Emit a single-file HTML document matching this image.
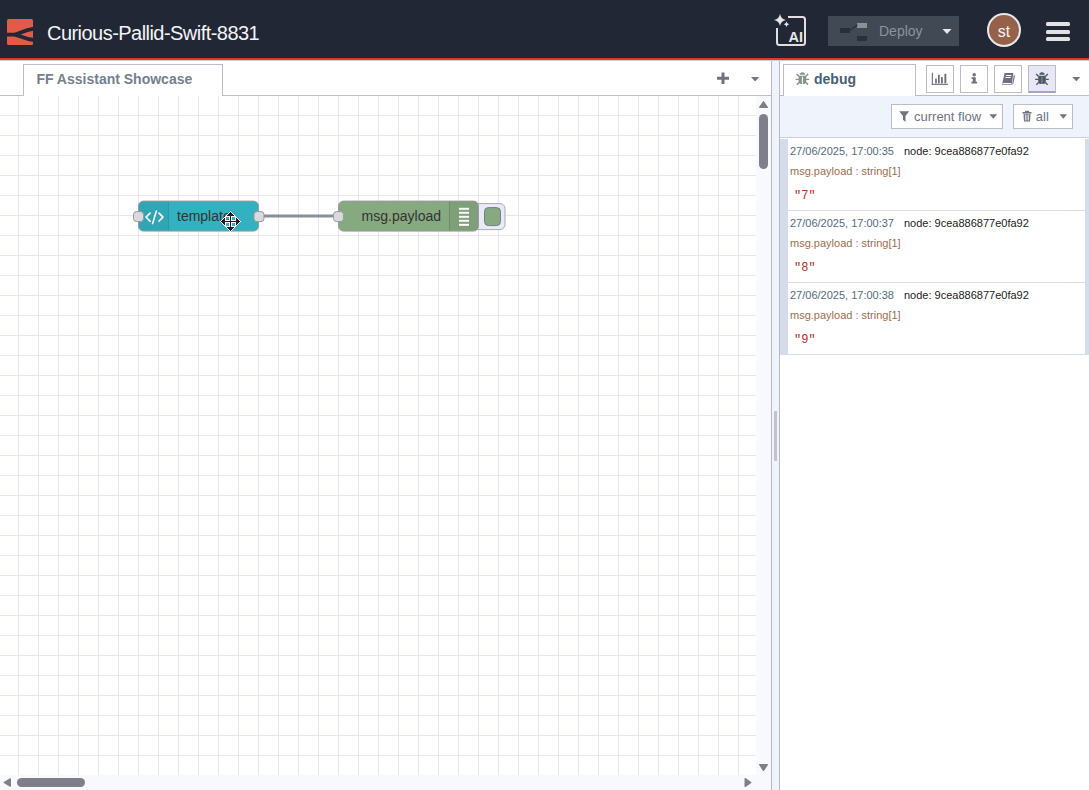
<!DOCTYPE html>
<html><head><meta charset="utf-8">
<style>
*{margin:0;padding:0;box-sizing:border-box}
html,body{width:1089px;height:790px;overflow:hidden;background:#fff;font-family:"Liberation Sans",sans-serif}
.a{position:absolute}
#hdr{left:0;top:0;width:1089px;height:58px;background:#212735}
#red{left:0;top:57px;width:1089px;height:1px;background:#172533}
#red2{left:0;top:58px;width:1089px;height:2px;background:#dc3a2e}
#shd{left:0;top:60px;width:1089px;height:1px;background:#c9d0d8}
#title{left:47px;top:21.5px;font-size:20px;letter-spacing:-0.54px;color:#f3f4f6;line-height:23px;white-space:nowrap}
#deploy{left:828px;top:16px;width:131px;height:30px;background:#414955}
#deploytxt{left:879px;top:23px;font-size:14px;line-height:16px;color:#8d939b}
#avatar{left:987px;top:13px;width:34px;height:34px;border-radius:50%;background:#96614a;border:2px solid #e6e9ee}
#avtxt{left:987px;top:22.5px;width:34px;text-align:center;font-size:16px;line-height:18px;color:#f4f4f4}
.bar{left:1046px;width:24px;height:4px;border-radius:1.5px;background:#e2e2e4}
/* workspace */
#wsb{left:0;top:95px;width:771px;height:1px;background:#bcbcc4}
#tab{left:23px;top:64px;width:200px;height:32px;border:1px solid #bcbcc4;border-bottom:none;background:#fff}
#tabtxt{left:36.4px;top:72px;font-size:14px;font-weight:bold;color:#767f8c;line-height:14px;white-space:nowrap}
#canvas{left:0;top:96px;width:756px;height:679px;background-color:#fff;
 background-image:linear-gradient(to right,#e6e5f3 1px,transparent 1px),linear-gradient(to bottom,#e6e5f3 1px,transparent 1px);
 background-size:20px 20px;background-position:18px 19px}
#vsb{left:756px;top:96px;width:15px;height:679px;background:#f8f9fc}
#hsb{left:0;top:775px;width:756px;height:15px;background:#f8f9fc}
#corner{left:756px;top:775px;width:15px;height:15px;background:#f8f9fc}
#wsr{left:771px;top:61px;width:1px;height:729px;background:#b8b8c0}
#sep{left:772px;top:61px;width:7px;height:729px;background:#eff3fc}
#handle{left:774px;top:411px;width:3px;height:50px;background:#c2c2cb}
#sbl{left:779px;top:61px;width:1px;height:729px;background:#b8b8c0}
/* sidebar */
#sbb{left:780px;top:95px;width:309px;height:1px;background:#bcbcc4}
#dtab{left:783px;top:64px;width:133px;height:32px;border:1px solid #bcbcc4;border-bottom:none;background:#fff}
#dtabtxt{left:814px;top:72px;font-size:14px;font-weight:bold;color:#46607a;line-height:14px}
.sbtn{top:65px;width:28px;height:28px;border:1px solid #bcbcc4;background:#fff}
#toolbar{left:780px;top:96px;width:309px;height:41px;background:#eff3fc}
#tbb{left:780px;top:137px;width:309px;height:1px;background:#ccd0dc}
.tbtn{top:104px;height:25px;border:1px solid #bcbcc4;background:#fff;font-size:13px;color:#7c8591}
.msg{left:780px;width:309px;height:72px;border-left:8px solid #d5dbeb;border-bottom:1px solid #d7dcec;background:#fff}
.rbar{left:1085px;width:4px;height:71px;background:#d5dbeb}
.ts{left:790px;font-size:11px;color:#546b7c;line-height:13px;white-space:nowrap}
.nd{left:904px;font-size:11px;color:#222;line-height:13px;white-space:nowrap}
.mp{left:790px;font-size:11px;color:#9f6d50;line-height:13px;white-space:nowrap}
.val{left:794px;margin-top:0.8px;font-family:"Liberation Mono",monospace;font-size:12px;color:#ba2e28;line-height:14px;white-space:nowrap}
</style></head><body>
<div class="a" id="hdr"></div>
<div class="a" id="red"></div>
<div class="a" id="red2"></div>
<div class="a" id="shd"></div>
<svg class="a" style="left:0;top:0" width="60" height="58" viewBox="0 0 60 58">
 <rect x="7" y="19" width="26" height="26" rx="1.5" fill="#e35b48"/>
 <path d="M6,34.6 L14,34.6 C18,34.6 23,30.3 34,28.7 M14,34.6 C18,34.6 23,38.8 34,40" stroke="#212735" stroke-width="3.8" fill="none"/>
</svg>
<div class="a" id="title">Curious-Pallid-Swift-8831</div>
<!-- AI icon -->
<svg class="a" style="left:770px;top:10px" width="42" height="42" viewBox="770 10 42 42">
 <path d="M788,17 L802.5,17 Q805,17 805,19.5 L805,42.5 Q805,45 802.5,45 L779.5,45 Q777,45 777,42.5 L777,28" stroke="#e0e0e4" stroke-width="2" fill="none"/>
 <path d="M780,13.8 Q780.8,19 786,19.9 Q780.8,20.8 780,26 Q779.2,20.8 774,19.9 Q779.2,19 780,13.8Z" fill="#e6e6e8"/>
 <path d="M786.5,21.6 Q786.9,23.9 789.2,24.3 Q786.9,24.7 786.5,27 Q786.1,24.7 783.8,24.3 Q786.1,23.9 786.5,21.6Z" fill="#e6e6e8"/>
 <text x="788.5" y="42.3" font-family="Liberation Sans" font-weight="bold" font-size="14.5" fill="#e6e6e8">AI</text>
</svg>
<div class="a" id="deploy"></div>
<svg class="a" style="left:828px;top:16px" width="131" height="30" viewBox="828 16 131 30">
 <rect x="840" y="28" width="10" height="5" fill="#2a303a"/>
 <rect x="857" y="23" width="10" height="5" fill="#8d9098"/>
 <rect x="857" y="36" width="10" height="5" fill="#2a303a"/>
 <path d="M849.5,30.5 L857.5,25" stroke="#2a303a" stroke-width="1.2"/>
 <path d="M942.5,29 L951.5,29 L947,34Z" fill="#e8e8ec"/>
</svg>
<div class="a" id="deploytxt">Deploy</div>
<div class="a" id="avatar"></div>
<div class="a" id="avtxt">st</div>
<div class="a bar" style="top:22px"></div>
<div class="a bar" style="top:29.5px"></div>
<div class="a bar" style="top:37px"></div>

<!-- workspace -->
<div class="a" id="wsb"></div>
<div class="a" id="tab"></div>
<div class="a" id="tabtxt">FF Assistant Showcase</div>
<svg class="a" style="left:700px;top:61px" width="71" height="34" viewBox="700 61 71 34">
 <path d="M717,78.3 L729,78.3 M723,72.5 L723,84" stroke="#6e7480" stroke-width="3"/>
 <path d="M751,77 L759.2,77 L755.1,81.5Z" fill="#6e7480"/>
</svg>
<div class="a" id="canvas"></div>
<div class="a" id="vsb"></div>
<div class="a" id="hsb"></div>
<div class="a" id="corner"></div>
<svg class="a" style="left:0;top:96px" width="771" height="694" viewBox="0 96 771 694">
 <!-- scrollbars -->
 <path d="M763.5,101.8 L767.3,107.3 L759.7,107.3Z" fill="#7f7f8b" stroke="#7f7f8b" stroke-width="1.4" stroke-linejoin="round"/>
 <rect x="759" y="114" width="9" height="55" rx="4.5" fill="#7f7f8b"/>
 <path d="M759.7,764.7 L767.3,764.7 L763.5,770.3Z" fill="#7f7f8b" stroke="#7f7f8b" stroke-width="1.4" stroke-linejoin="round"/>
 <path d="M10.3,778.9 L10.3,786.1 L4.2,782.5Z" fill="#7f7f8b" stroke="#7f7f8b" stroke-width="1.4" stroke-linejoin="round"/>
 <rect x="17" y="778" width="68" height="9" rx="4.5" fill="#7f7f8b"/>
 <path d="M745.2,778.7 L745.2,786.3 L750.8,782.5Z" fill="#7f7f8b" stroke="#7f7f8b" stroke-width="1.4" stroke-linejoin="round"/>
 <!-- wire -->
 <path d="M259,216 L339,216" stroke="#888f96" stroke-width="3" fill="none"/>
 <g transform="translate(0,0.6)">
 <!-- template node -->
 <rect x="138.5" y="200.5" width="120" height="30" rx="5" fill="#34b1c1" stroke="#9a9aa0" stroke-width="1"/>
 <path d="M143.5,201 L168.5,201 L168.5,230 L143.5,230 Q139,230 139,225.5 L139,205.5 Q139,201 143.5,201Z" fill="rgba(0,0,0,0.06)"/>
 <path d="M168.5,201 L168.5,230" stroke="rgba(0,40,80,0.15)" stroke-width="1"/>
 <g stroke="#fff" stroke-width="1.6" fill="none" stroke-linecap="round" stroke-linejoin="round">
  <path d="M150,212.5 L146,216.5 L150,220.5"/>
  <path d="M159,212.5 L163,216.5 L159,220.5"/>
  <path d="M156.4,210.5 L152.6,223"/>
 </g>
 <text x="177" y="220.5" font-family="Liberation Sans" font-size="14" fill="#333">template</text>
 <rect x="133.5" y="211" width="10" height="10" rx="3" fill="#d9dadf" stroke="#999" stroke-width="1"/>
 <rect x="254" y="211" width="10" height="10" rx="3" fill="#d9dadf" stroke="#999" stroke-width="1"/>
 <!-- debug node -->
 <rect x="473" y="203" width="32" height="26" rx="5" fill="#eaeaf6" stroke="#aaaab4" stroke-width="1"/>
 <rect x="484.5" y="207" width="16" height="18" rx="4" fill="#87a980" stroke="#7a7a90" stroke-width="1"/>
 <rect x="338.5" y="200.5" width="140" height="30" rx="5" fill="#87a980" stroke="#9a9aa0" stroke-width="1"/>
 <path d="M449.5,201 L473.5,201 Q478,201 478,205.5 L478,225.5 Q478,230 473.5,230 L449.5,230Z" fill="rgba(0,0,0,0.06)"/>
 <path d="M449.5,201 L449.5,230" stroke="rgba(0,0,0,0.15)" stroke-width="1"/>
 <g fill="#fff">
  <rect x="459" y="207.2" width="10" height="2"/>
  <rect x="459" y="211.2" width="10" height="2"/>
  <rect x="459" y="215.2" width="10" height="2"/>
  <rect x="459" y="219.2" width="10" height="2"/>
  <rect x="459" y="223.2" width="10" height="2"/>
 </g>
 <text x="441" y="220.5" text-anchor="end" font-family="Liberation Sans" font-size="14" fill="#333">msg.payload</text>
 <rect x="333.5" y="211" width="10" height="10" rx="3" fill="#d9dadf" stroke="#999" stroke-width="1"/>
 </g>
 <!-- cursor -->
 <g shape-rendering="crispEdges"><g fill="#fff"><rect x="230" y="211" width="1" height="1"/><rect x="229" y="212" width="1" height="1"/><rect x="231" y="212" width="1" height="1"/><rect x="228" y="213" width="1" height="1"/><rect x="232" y="213" width="1" height="1"/><rect x="227" y="214" width="1" height="1"/><rect x="233" y="214" width="1" height="1"/><rect x="226" y="215" width="1" height="1"/><rect x="234" y="215" width="1" height="1"/><rect x="225" y="216" width="5" height="1"/><rect x="231" y="216" width="5" height="1"/><rect x="224" y="217" width="2" height="1"/><rect x="229" y="217" width="1" height="1"/><rect x="231" y="217" width="1" height="1"/><rect x="235" y="217" width="2" height="1"/><rect x="223" y="218" width="1" height="1"/><rect x="225" y="218" width="1" height="1"/><rect x="229" y="218" width="1" height="1"/><rect x="231" y="218" width="1" height="1"/><rect x="235" y="218" width="1" height="1"/><rect x="237" y="218" width="1" height="1"/><rect x="222" y="219" width="1" height="1"/><rect x="225" y="219" width="1" height="1"/><rect x="229" y="219" width="1" height="1"/><rect x="231" y="219" width="1" height="1"/><rect x="235" y="219" width="1" height="1"/><rect x="238" y="219" width="1" height="1"/><rect x="221" y="220" width="1" height="1"/><rect x="225" y="220" width="5" height="1"/><rect x="231" y="220" width="5" height="1"/><rect x="239" y="220" width="1" height="1"/><rect x="220" y="221" width="1" height="1"/><rect x="240" y="221" width="1" height="1"/><rect x="221" y="222" width="1" height="1"/><rect x="225" y="222" width="5" height="1"/><rect x="231" y="222" width="5" height="1"/><rect x="239" y="222" width="1" height="1"/><rect x="222" y="223" width="1" height="1"/><rect x="225" y="223" width="1" height="1"/><rect x="229" y="223" width="1" height="1"/><rect x="231" y="223" width="1" height="1"/><rect x="235" y="223" width="1" height="1"/><rect x="238" y="223" width="1" height="1"/><rect x="223" y="224" width="1" height="1"/><rect x="225" y="224" width="1" height="1"/><rect x="229" y="224" width="1" height="1"/><rect x="231" y="224" width="1" height="1"/><rect x="235" y="224" width="1" height="1"/><rect x="237" y="224" width="1" height="1"/><rect x="224" y="225" width="2" height="1"/><rect x="229" y="225" width="1" height="1"/><rect x="231" y="225" width="1" height="1"/><rect x="235" y="225" width="2" height="1"/><rect x="225" y="226" width="5" height="1"/><rect x="231" y="226" width="5" height="1"/><rect x="226" y="227" width="1" height="1"/><rect x="234" y="227" width="1" height="1"/><rect x="227" y="228" width="1" height="1"/><rect x="233" y="228" width="1" height="1"/><rect x="228" y="229" width="1" height="1"/><rect x="232" y="229" width="1" height="1"/><rect x="229" y="230" width="1" height="1"/><rect x="231" y="230" width="1" height="1"/><rect x="230" y="231" width="1" height="1"/></g><g fill="#1b1f2a"><rect x="230" y="212" width="1" height="1"/><rect x="229" y="213" width="3" height="1"/><rect x="228" y="214" width="5" height="1"/><rect x="227" y="215" width="7" height="1"/><rect x="230" y="216" width="1" height="1"/><rect x="230" y="217" width="1" height="1"/><rect x="224" y="218" width="1" height="1"/><rect x="230" y="218" width="1" height="1"/><rect x="236" y="218" width="1" height="1"/><rect x="223" y="219" width="2" height="1"/><rect x="230" y="219" width="1" height="1"/><rect x="236" y="219" width="2" height="1"/><rect x="222" y="220" width="3" height="1"/><rect x="230" y="220" width="1" height="1"/><rect x="236" y="220" width="3" height="1"/><rect x="221" y="221" width="19" height="1"/><rect x="222" y="222" width="3" height="1"/><rect x="230" y="222" width="1" height="1"/><rect x="236" y="222" width="3" height="1"/><rect x="223" y="223" width="2" height="1"/><rect x="230" y="223" width="1" height="1"/><rect x="236" y="223" width="2" height="1"/><rect x="224" y="224" width="1" height="1"/><rect x="230" y="224" width="1" height="1"/><rect x="236" y="224" width="1" height="1"/><rect x="230" y="225" width="1" height="1"/><rect x="230" y="226" width="1" height="1"/><rect x="227" y="227" width="7" height="1"/><rect x="228" y="228" width="5" height="1"/><rect x="229" y="229" width="3" height="1"/><rect x="230" y="230" width="1" height="1"/></g></g>

</svg>
<div class="a" id="wsr"></div>
<div class="a" id="sep"></div>
<div class="a" id="handle"></div>
<div class="a" id="sbl"></div>

<!-- sidebar -->
<div class="a" id="sbb"></div>
<div class="a" id="dtab"></div>
<svg class="a" style="left:780px;top:61px" width="40" height="34" viewBox="780 61 40 34">
 <g fill="#869388">
  <path d="M799.6999999999999,74.8 Q799.6999999999999,72.2 802.4,72.2 Q805.1,72.2 805.1,74.8Z"/>
  <path d="M798.6,75.8 L806.1999999999999,75.8 L806.1999999999999,81.3 Q806.1999999999999,83.9 803.6,83.9 L801.1999999999999,83.9 Q798.6,83.9 798.6,81.3Z"/>
 </g>
 <rect x="801.9" y="76.6" width="1" height="7.3" fill="#fff"/>
 <g stroke="#869388" stroke-width="1.3" fill="none">
  <path d="M795.6,79.4 L798.9,79.4 M805.9,79.4 L809.1999999999999,79.4 M796.6,74 L798.8,76.3 M808.1999999999999,74 L806.0,76.3 M796.8,84.8 L799.0,82.5 M808.0,84.8 L805.8,82.5"/>
 </g>
</svg>
<div class="a" id="dtabtxt">debug</div>
<div class="a sbtn" style="left:926px"></div>
<div class="a sbtn" style="left:960px"></div>
<div class="a sbtn" style="left:994px"></div>
<div class="a sbtn" style="left:1028px;background:#e8e8f5;border-bottom:2px solid #a3a2cc"></div>
<svg class="a" style="left:920px;top:61px" width="169" height="34" viewBox="920 61 169 34">
 <g fill="#6e6f7c">
  <rect x="931.8" y="72.8" width="1.1" height="12"/>
  <rect x="931.8" y="83.8" width="16.2" height="1.1"/>
  <rect x="935.1" y="78.6" width="1.7" height="4.8"/>
  <rect x="938" y="74.8" width="1.7" height="8.6"/>
  <rect x="941" y="77.1" width="1.8" height="6.3"/>
  <rect x="944.4" y="73.8" width="1.9" height="9.6"/>
 </g>
 <g fill="#6e6f7c">
  <circle cx="974.2" cy="74.8" r="1.7"/>
  <path d="M971.6,77.2 L975.7,77.2 L975.7,81.7 L977.1,81.7 L977.1,83.4 L971.4,83.4 L971.4,81.7 L972.8,81.7 L972.8,78.9 L971.6,78.9Z"/>
 </g>
 <path d="M1004.6,73 L1013.4,73 L1011.7,84.8 L1002,84.8Z" fill="#6e6f7c"/>
 <path d="M1013.8,75.2 L1015,75.6 L1013.2,84.2 L1012.2,84.6Z" fill="#6e6f7c"/>
 <g fill="#fff">
  <path d="M1006.1,75 L1011.4,75 L1011.2,76.1 L1005.9,76.1Z"/>
  <path d="M1005.5,77 L1010.8,77 L1010.6,78.1 L1005.3,78.1Z"/>
  <rect x="1002.6" y="83" width="8.6" height="1.1"/>
 </g>
 <g fill="#4c5866">
  <path d="M1039.3,74.8 Q1039.3,72.2 1042,72.2 Q1044.7,72.2 1044.7,74.8Z"/>
  <path d="M1038.2,75.8 L1045.8,75.8 L1045.8,81.3 Q1045.8,83.9 1043.2,83.9 L1040.8,83.9 Q1038.2,83.9 1038.2,81.3Z"/>
 </g>
 <rect x="1041.5" y="76.6" width="1" height="7.3" fill="#8a93a0"/>
 <g stroke="#4c5866" stroke-width="1.3" fill="none">
  <path d="M1035.2,79.4 L1038.5,79.4 M1045.5,79.4 L1048.8,79.4 M1036.2,74 L1038.4,76.3 M1047.8,74 L1045.6,76.3 M1036.4,84.8 L1038.6,82.5 M1047.6,84.8 L1045.4,82.5"/>
 </g>
 <path d="M1072.3,77 L1080.3,77 L1076.3,81.3Z" fill="#6e7480"/>
</svg>
<div class="a" id="toolbar"></div>
<div class="a" id="tbb"></div>
<div class="a tbtn" style="left:891px;width:112px"></div>
<div class="a tbtn" style="left:1013px;width:60px"></div>
<svg class="a" style="left:880px;top:96px" width="209" height="41" viewBox="880 96 209 41">
 <path d="M899.2,111.3 L909.2,111.3 L905.5,116 L905.5,122 L903,119.8 L903,116Z" fill="#6e7480"/>
 <path d="M989.4,114.2 L997.1,114.2 L993.25,118.8Z" fill="#6e7480"/>
 <g fill="#6e7480">
  <rect x="1022.5" y="112" width="9" height="1.6"/>
  <rect x="1025" y="110.8" width="4" height="1.5"/>
  <path d="M1023.5,114.2 L1030.5,114.2 L1030,121.5 L1024,121.5Z"/>
 </g>
 <g stroke="#fff" stroke-width="0.7"><path d="M1025.5,115 L1025.5,120.5 M1027,115 L1027,120.5 M1028.5,115 L1028.5,120.5"/></g>
 <path d="M1059.5,114.2 L1067.1,114.2 L1063.3,118.8Z" fill="#6e7480"/>
</svg>
<div class="a" style="left:914px;top:109px;font-size:13px;line-height:15px;color:#6c7484">current flow</div>
<div class="a" style="left:1035.8px;top:108.6px;font-size:13px;line-height:15px;color:#6c7484">all</div>

<!-- messages -->
<div class="a msg" style="top:139px"></div>
<div class="a rbar" style="top:139px"></div>
<div class="a msg" style="top:211px"></div>
<div class="a rbar" style="top:211px"></div>
<div class="a msg" style="top:283px"></div>
<div class="a rbar" style="top:283px"></div>

<div class="a ts" style="top:145px">27/06/2025, 17:00:35</div>
<div class="a nd" style="top:145px">node: 9cea886877e0fa92</div>
<div class="a mp" style="top:165px">msg.payload : string[1]</div>
<div class="a val" style="top:188px">"7"</div>

<div class="a ts" style="top:217px">27/06/2025, 17:00:37</div>
<div class="a nd" style="top:217px">node: 9cea886877e0fa92</div>
<div class="a mp" style="top:237px">msg.payload : string[1]</div>
<div class="a val" style="top:260px">"8"</div>

<div class="a ts" style="top:289px">27/06/2025, 17:00:38</div>
<div class="a nd" style="top:289px">node: 9cea886877e0fa92</div>
<div class="a mp" style="top:309px">msg.payload : string[1]</div>
<div class="a val" style="top:332px">"9"</div>
</body></html>
